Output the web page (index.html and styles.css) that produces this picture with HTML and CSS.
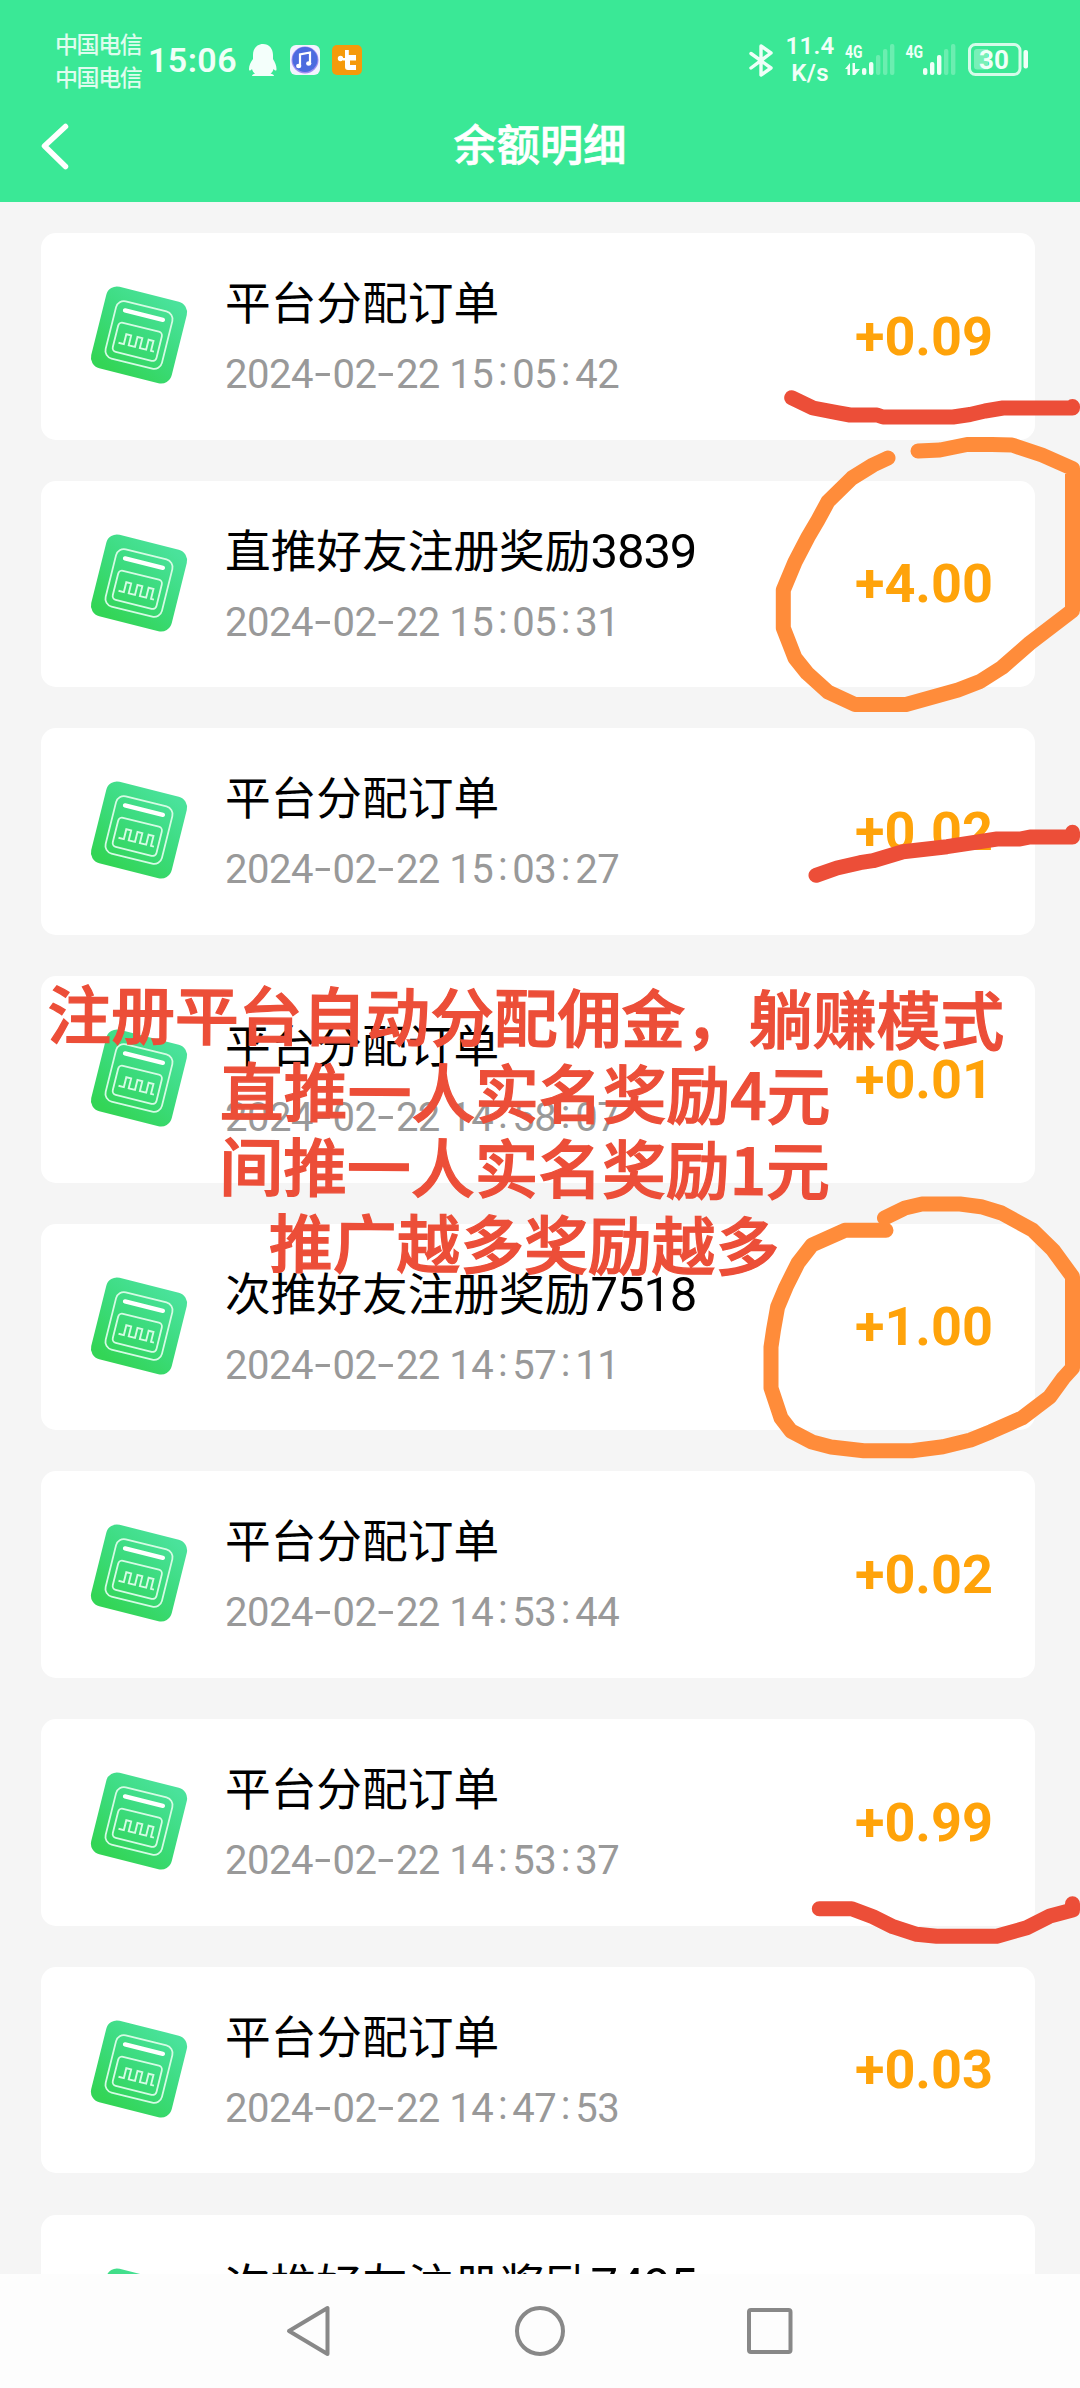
FILE: index.html
```html
<!DOCTYPE html>
<html lang="zh-CN">
<head>
<meta charset="utf-8">
<title>余额明细</title>
<link rel="stylesheet" href="styles.css">
</head>
<body>
<svg class="defs" aria-hidden="true">
  <defs>
    <linearGradient id="tile" x1="0.75" y1="0" x2="0.3" y2="1">
      <stop offset="0" stop-color="#4ae29b"/>
      <stop offset="0.5" stop-color="#3bdb7c"/>
      <stop offset="1" stop-color="#33d556"/>
    </linearGradient>
    <symbol id="order" viewBox="-52 -52 104 104">
      <g transform="rotate(14)" fill="none" stroke="#d5fbe4">
        <rect x="-41.500" y="-42" width="83" height="84" rx="11" fill="url(#tile)" stroke="none"/>
        <rect x="-29" y="-29.5" width="58" height="59" rx="8" stroke-width="1.8"/>
        <path d="M-19.5-20.5H19.5" stroke="#fff" stroke-width="4.4" stroke-linecap="round"/>
        <rect x="-22.5" y="-8" width="45" height="30" rx="4" stroke-width="1.8"/>
        <path d="M-18 12.500h5.500V2.300h5V12.500h6.500V2.300h5V12.500h6.500V2.300h5V12.500h3" stroke-width="1.9"/>
      </g>
    </symbol>
  </defs>
</svg>
<div class="screen">
  <header class="header">
    <div class="status">
      <div class="carriers"><span>中国电信</span><span>中国电信</span></div>
      <span class="clock">15:06</span>
      <svg class="notes" width="116" height="36" viewBox="247 42 116 36">
        <path fill="#f4fffb" d="M263 44c6 0 10 4.500 10 11v4c2 3 3.500 7 3.500 10 0 2-1 2-3 0-.5 2-1.500 3.500-3 4.500 2 .5 3.500 1.200 3.500 2.500H252c0-1.300 1.500-2 3-2.500-1.500-1-2.500-2.500-3-4.500-2 2-3 2-3 0 0-3 1.500-7 4-10v-4c0-6.500 4-11 10-11z"/>
        <rect x="290" y="45" width="30" height="30" rx="6" fill="#f3f3ff"/>
        <circle cx="305" cy="60" r="13.500" fill="#9e8df0"/>
        <circle cx="305" cy="59.500" r="12.500" fill="#4c6bdf"/>
        <path d="M300 66V54.500l10-2v11" fill="none" stroke="#fff" stroke-width="2.200"/>
        <ellipse cx="298.700" cy="66" rx="2.600" ry="2.200" fill="#fff"/><ellipse cx="308.700" cy="63.500" rx="2.600" ry="2.200" fill="#fff"/>
        <rect x="332" y="45" width="30" height="30" rx="5" fill="#f59a0b"/>
        <circle cx="340.500" cy="58.500" r="2.700" fill="#fff"/>
        <path fill="#fff" d="M345 50h3.800v5h7.200v5.500h-6v4.500h6V70h-8q-3 0-3-3v-6.500h-2V58h2z"/>
      </svg>
      <span class="spring"></span>
      <svg class="bluetooth" width="24" height="36" viewBox="749 42 24 36">
        <path d="M751 53.500l20 14.500-10 7V46l10 7-20 15" fill="none" stroke="#effff8" stroke-width="3.400" stroke-linejoin="round" stroke-linecap="round"/>
      </svg>
      <div class="speed"><span>11.4</span><span>K/s</span></div>
      <svg class="signal" width="186" height="36" viewBox="844 42 186 36" fill="#f0fff8">
        <text class="net" x="845" y="57.500" textLength="17.500" lengthAdjust="spacingAndGlyphs">4G</text>
        <path d="M845 69l5-6v12h-2.500v-6zM852.500 63h2.500v6h5l-5 6h-2.500z"/>
        <rect x="862" y="68" width="4.400" height="7" rx="2"/><rect x="869" y="62" width="4.400" height="13" rx="2"/>
        <g opacity=".27"><rect x="876" y="55" width="4.400" height="20" rx="2"/><rect x="883" y="49" width="4.400" height="26" rx="2"/><rect x="890" y="44" width="4.400" height="31" rx="2"/></g>
        <text class="net" x="905.500" y="57.500" textLength="17.500" lengthAdjust="spacingAndGlyphs">4G</text>
        <rect x="923" y="68" width="4.400" height="7" rx="2"/><rect x="930" y="62" width="4.400" height="13" rx="2"/><rect x="937" y="55" width="4.400" height="20" rx="2"/>
        <g opacity=".27"><rect x="944" y="49" width="4.400" height="26" rx="2"/><rect x="951" y="44" width="4.400" height="31" rx="2"/></g>
        <rect x="969.500" y="44.500" width="50.500" height="30" rx="6" fill="none" stroke="#d5fbe9" stroke-width="3"/>
        <path d="M977 49h11v20.500h-11q-3 0-3-3V52q0-3 3-3z" opacity=".35"/>
        <rect x="1023.500" y="50" width="4.500" height="18.500" rx="2"/>
        <text class="level" x="994" y="69" text-anchor="middle">30</text>
      </svg>
    </div>
    <div class="titlebar">
      <svg class="back" width="32" height="50" viewBox="40 121 32 50"><path d="M65.500 126.500L44.500 146l21 20.500" fill="none" stroke="#fff" stroke-width="5.500" stroke-linecap="round" stroke-linejoin="round"/></svg>
      <h1>余额明细</h1>
    </div>
  </header>

  <main class="list">
    <article class="card">
      <svg class="tile"><use href="#order"/></svg>
      <div class="info"><h2>平台分配订单</h2><time>2024<i>-</i>02<i>-</i>22 15<b>:</b>05<b>:</b>42</time></div>
      <strong>+0.09</strong>
    </article>
    <article class="card">
      <svg class="tile"><use href="#order"/></svg>
      <div class="info"><h2>直推好友注册奖励<span>3839</span></h2><time>2024<i>-</i>02<i>-</i>22 15<b>:</b>05<b>:</b>31</time></div>
      <strong>+4.00</strong>
    </article>
    <article class="card">
      <svg class="tile"><use href="#order"/></svg>
      <div class="info"><h2>平台分配订单</h2><time>2024<i>-</i>02<i>-</i>22 15<b>:</b>03<b>:</b>27</time></div>
      <strong>+0.02</strong>
    </article>
    <article class="card">
      <svg class="tile"><use href="#order"/></svg>
      <div class="info"><h2>平台分配订单</h2><time>2024<i>-</i>02<i>-</i>22 14<b>:</b>58<b>:</b>07</time></div>
      <strong>+0.01</strong>
    </article>
    <article class="card">
      <svg class="tile"><use href="#order"/></svg>
      <div class="info"><h2>次推好友注册奖励<span>7518</span></h2><time>2024<i>-</i>02<i>-</i>22 14<b>:</b>57<b>:</b>11</time></div>
      <strong>+1.00</strong>
    </article>
    <article class="card">
      <svg class="tile"><use href="#order"/></svg>
      <div class="info"><h2>平台分配订单</h2><time>2024<i>-</i>02<i>-</i>22 14<b>:</b>53<b>:</b>44</time></div>
      <strong>+0.02</strong>
    </article>
    <article class="card">
      <svg class="tile"><use href="#order"/></svg>
      <div class="info"><h2>平台分配订单</h2><time>2024<i>-</i>02<i>-</i>22 14<b>:</b>53<b>:</b>37</time></div>
      <strong>+0.99</strong>
    </article>
    <article class="card">
      <svg class="tile"><use href="#order"/></svg>
      <div class="info"><h2>平台分配订单</h2><time>2024<i>-</i>02<i>-</i>22 14<b>:</b>47<b>:</b>53</time></div>
      <strong>+0.03</strong>
    </article>
    <article class="card">
      <svg class="tile"><use href="#order"/></svg>
      <div class="info"><h2>次推好友注册奖励<span>7495</span></h2></div>
    </article>
  </main>

  <nav class="nav">
    <svg width="50" height="54" viewBox="0 0 50 54"><path d="M5 27L43.500 4v46z"/></svg>
    <svg width="54" height="54" viewBox="0 0 54 54"><circle cx="27" cy="27" r="23"/></svg>
    <svg width="50" height="54" viewBox="0 0 50 54"><rect x="4" y="6" width="41.500" height="42" rx="2"/></svg>
  </nav>

  <svg class="marks" viewBox="0 0 1080 2388">
    <g class="red">
      <path d="M791.700 397.700L813 408 837 412.700 850 415H877L883 417H953L970 414.500 985 411 1003 408H1072.500V406.500"/>
      <path d="M816 875.300L837 868 860 862.700 873 860.700 903 851.700 947 846.700 997 839H1020L1030 837H1072.500V832.300"/>
      <path d="M819.300 1908.700H851.700L873 1916.700 893 1926.700 916.700 1934.300 936.700 1936.300H996.700L1026.700 1927.700 1050 1916 1072.500 1910V1903.700"/>
    </g>
    <g class="orange">
      <path d="M888 458L873 465 852 478 828 501.500 818 520 808 537 795 562 783.300 590V628L795 658 807 673 828 692 855 704.500H906L958 690 980 681.500 1002 667.500 1030 643 1072.500 610.500V468.500L1042 455 1012 445 992 444.500H967L940 450 918 451"/>
      <path d="M886 1230.300H844.800L812 1245 798 1263 786 1287 777.600 1307 773.500 1330 771 1347V1388L781 1418 791 1431 812 1442 831 1447 863.700 1450.700H912L943 1446.700 970.500 1440 991 1431.700 1022 1418 1049.600 1397 1063.400 1378 1072.500 1368V1276.700L1053 1250 1032.500 1230 1001.500 1213 981 1206.700 960 1204H922L905 1208 884.500 1218"/>
    </g>
  </svg>
  <p class="caption">注册平台自动分配佣金，躺赚模式<br>直推一人实名奖励4元<br>间推一人实名奖励1元<br>推广越多奖励越多</p>
</div>
</body>
</html>
```
FILE: styles.css
```css
* { box-sizing: border-box; margin: 0; padding: 0; }
body { background: #f5f5f5; font-family: "Noto Sans CJK SC", sans-serif; }
svg { display: block; flex: none; }
.defs { position: absolute; width: 0; height: 0; }
.screen { position: relative; width: 1080px; height: 2388px; overflow: hidden; display: flex; flex-direction: column; }

.header { height: 202px; flex: none; background: #3ae896; color: #fff; padding-top: 28px; }
.status { display: flex; align-items: center; height: 64px; padding: 0 50px 0 55px; color: #f0fff8; }
.carriers { width: 93px; display: flex; flex-direction: column; font-size: 23px; font-weight: 500; line-height: 33px; letter-spacing: -1.4px; white-space: nowrap; opacity: .9; }
.clock { width: 99px; font: 600 34px/40px Roboto, sans-serif; letter-spacing: .4px; }
.spring { flex: 1; }
.bluetooth { margin-right: 11px; }
.speed { width: 52px; margin-right: 8px; display: flex; flex-direction: column; align-items: center; font: 600 24px/27px Roboto, sans-serif; letter-spacing: .3px; }
.net { font: 700 19px Roboto, sans-serif; }
.level { font: 700 26px Roboto, sans-serif; }
.titlebar { display: flex; align-items: center; height: 108px; padding: 0 40px; }
.titlebar h1 { flex: 1; padding: 0 32px 8px 0; text-align: center; font-size: 43.2px; font-weight: 500; line-height: 60px; -webkit-text-stroke: .7px #fff; }

.list { flex: 1; min-height: 0; overflow: hidden; padding: 31px 45px 0 41px; display: flex; flex-direction: column; gap: 41.100px; }
.card { flex: none; height: 206.600px; border-radius: 15px; background: #fff; display: flex; align-items: flex-start; padding: 0 42px 0 46px; }
.tile { width: 104px; height: 104px; margin-top: 50px; }
.info { flex: 1; padding: 37px 0 0 34px; }
.info h2 { height: 60px; font-size: 45.700px; font-weight: 400; line-height: 60px; color: #000; white-space: nowrap; }
.info h2 span { font-family: Roboto, sans-serif; font-size: 49px; letter-spacing: -1.100px; }
.info time { display: block; height: 50px; margin-top: 20px; font: 400 40px/50px Roboto, sans-serif; letter-spacing: -.5px; color: #999; white-space: nowrap; }
.info i, .info b { display: inline-block; text-align: center; font-style: normal; font-weight: 400; letter-spacing: 0; }
.info i { width: 19.500px; transform: translateY(-1px) scaleX(1.500); }
.info b { width: 19px; transform: translateY(-3px); }
.card strong { font: 700 54px/60px Roboto, sans-serif; color: #ffa30a; margin-top: 73.500px; }

.nav { height: 114px; flex: none; background: #fdfdfd; display: flex; align-items: center; justify-content: space-between; padding: 0 285px 0 284px; }
.nav svg { fill: none; stroke: #888; stroke-width: 4; stroke-linejoin: round; }

.marks { position: absolute; inset: 0; width: 1080px; height: 2388px; fill: none; stroke-width: 15; stroke-linecap: round; stroke-linejoin: round; }
.red { stroke: #ec4e38; }
.orange { stroke: #ff8c3a; }
.caption { position: absolute; left: 25px; top: 976.500px; width: 1000px; text-align: center; font-size: 63.800px; line-height: 75.700px; font-weight: 500; color: #ec4e38; white-space: nowrap; transform: rotate(.4deg); -webkit-text-stroke: 1.300px #ec4e38; }
```
